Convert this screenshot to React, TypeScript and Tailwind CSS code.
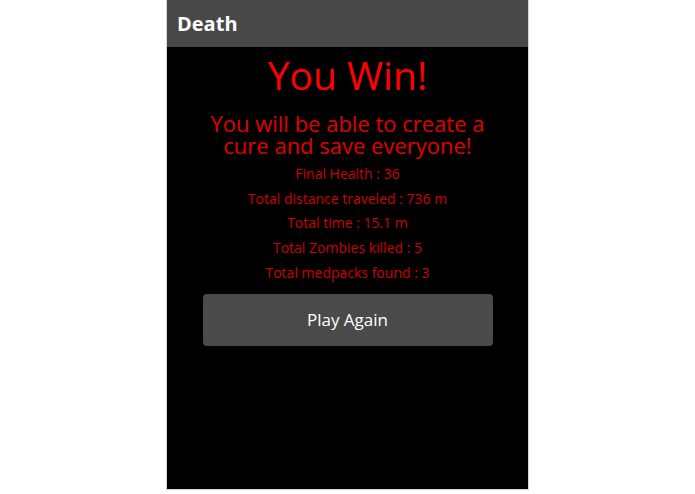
import React from 'react';

const stats = [
  'Final Health : 36',
  'Total distance traveled : 736 m',
  'Total time : 15.1 m',
  'Total Zombies killed : 5',
  'Total medpacks found : 3',
];

const App: React.FC = () => {
  return (
    <div className="min-h-screen bg-white" style={{ fontFamily: '"Open Sans", "Noto Sans", sans-serif' }}>
      <div className="mx-auto flex h-[490px] w-[363px] flex-col border-x border-b border-[#d4d4d4]">
        {/* Header */}
        <div className="flex h-[47px] items-center bg-[#484848] px-[10px]">
          <h1 className="text-[20px] font-bold text-white">Death</h1>
        </div>

        {/* Body */}
        <div className="flex flex-1 flex-col items-center bg-black">
          <h2 className="mt-[4px] text-[39px] leading-[48px] text-[#ff0000]">You Win!</h2>
          <p className="mt-[13px] w-[300px] text-center text-[22px] leading-[22px] text-[#e00000]">
            You will be able to create a cure and save everyone!
          </p>
          <div className="mt-[6px] flex flex-col items-center text-[14px] leading-[24.7px] text-[#cc0000]">
            {stats.map((s) => (
              <p key={s}>{s}</p>
            ))}
          </div>
          <button className="mt-[8px] h-[52px] w-[290px] rounded-[4px] bg-[#4a4a4a] text-[17px] text-white">
            Play Again
          </button>
        </div>
      </div>
    </div>
  );
};

export default App;
